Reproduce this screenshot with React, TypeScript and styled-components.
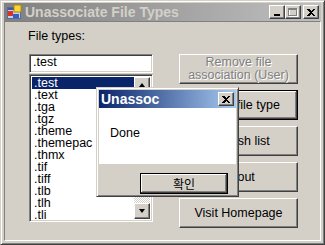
import React from "react";
import styled, { createGlobalStyle, css } from "styled-components";

const Global = createGlobalStyle`
  html, body { margin: 0; padding: 0; background: #d4d0c8; }
  body {
    font-family: "Liberation Sans", Arial, "Noto Sans CJK KR", sans-serif;
    font-size: 12.5px;
    color: #000;
  }
  * { box-sizing: border-box; }
`;

const raised = css`
  border: 1px solid;
  border-color: #ffffff #404040 #404040 #ffffff;
  box-shadow: inset -1px -1px #808080, inset 1px 1px #d4d0c8;
  background: #d4d0c8;
`;

const sunken = css`
  border: 1px solid;
  border-color: #808080 #ffffff #ffffff #808080;
  box-shadow: inset 1px 1px #404040, inset -1px -1px #d4d0c8;
`;

const Window = styled.div`
  position: relative;
  width: 325px;
  height: 245px;
  background: #d4d0c8;
  border: 1px solid;
  border-color: #d4d0c8 #404040 #404040 #d4d0c8;
  box-shadow: inset 1px 1px #ffffff, inset -1px -1px #808080;
  padding: 2px 3px 3px 3px;
  display: flex;
  flex-direction: column;
  overflow: hidden;
`;

const TitleBar = styled.div<{ $active?: boolean }>`
  height: 18px;
  flex: none;
  display: flex;
  align-items: center;
  padding: 0 2px;
  background: ${(p) =>
    p.$active
      ? "linear-gradient(to right, #0a246a, #a6caf0)"
      : "linear-gradient(to right, #808080, #c0c0c0)"};
  color: ${(p) => (p.$active ? "#ffffff" : "#d4d0c8")};
  font-family: "Liberation Sans", Arial, sans-serif;
  font-weight: bold;
  font-size: 14px;
`;

const TitleText = styled.span<{ $indent: number }>`
  flex: 1;
  margin-left: ${(p) => p.$indent}px;
  white-space: nowrap;
  overflow: hidden;
  line-height: 18px;
`;

const CaptionButton = styled.div<{ $gap?: number }>`
  ${raised};
  width: 16px;
  height: 14px;
  flex: none;
  display: flex;
  align-items: center;
  justify-content: center;
  margin-left: ${(p) => p.$gap ?? 0}px;
`;

const Client = styled.div`
  flex: 1;
  display: flex;
  align-items: flex-start;
  border: 1px solid;
  border-color: #808080 #ffffff #ffffff #808080;
  padding: 7px 0 0 24px;
  gap: 26px;
`;

const LeftColumn = styled.div`
  width: 124px;
  display: flex;
  flex-direction: column;
`;

const Label = styled.div`
  line-height: 14px;
  height: 14px;
  margin-left: -1px;
  white-space: nowrap;
`;

const TextField = styled.div`
  ${sunken};
  background: #ffffff;
  height: 19px;
  margin-top: 11px;
  padding-left: 3px;
  line-height: 15px;
`;

const ListBox = styled.div`
  ${sunken};
  background: #ffffff;
  height: 148px;
  margin-top: 1px;
  padding: 2px;
  display: flex;
`;

const Items = styled.div`
  flex: 1;
  overflow: hidden;
`;

const Item = styled.div<{ $selected?: boolean }>`
  height: 12px;
  line-height: 12px;
  padding-left: 2px;
  white-space: nowrap;
  background: ${(p) => (p.$selected ? "#0a246a" : "transparent")};
  color: ${(p) => (p.$selected ? "#ffffff" : "#000000")};
`;

const ScrollBar = styled.div`
  width: 16px;
  display: flex;
  flex-direction: column;
`;

const ScrollTrack = styled.div`
  flex: 1;
  background-color: #ffffff;
  background-image: repeating-conic-gradient(#d4d0c8 0 25%, #ffffff 0 50%);
  background-size: 2px 2px;
`;

const ArrowButton = styled.div`
  ${raised};
  width: 16px;
  height: 16px;
  display: flex;
  align-items: center;
  justify-content: center;
`;

const Arrow = styled.div<{ $down?: boolean }>`
  width: 0;
  height: 0;
  border-left: 3.5px solid transparent;
  border-right: 3.5px solid transparent;
  ${(p) =>
    p.$down
      ? "border-top: 4px solid #000;"
      : "border-bottom: 4px solid #000;"}
`;

const RightColumn = styled.div`
  width: 119px;
  margin-top: 25px;
  display: flex;
  flex-direction: column;
  gap: 6px;
`;

const Button = styled.div<{ $disabled?: boolean; $default?: boolean; $h?: number }>`
  height: ${(p) => p.$h ?? 30}px;
  display: flex;
  align-items: center;
  justify-content: center;
  text-align: center;
  line-height: 13px;
  white-space: nowrap;
  background: #d4d0c8;
  ${(p) =>
    p.$default
      ? css`
          border: 1px solid #000;
          box-shadow: inset -1px -1px #404040, inset 1px 1px #ffffff,
            inset -2px -2px #808080, inset 2px 2px #d4d0c8;
        `
      : raised}
  color: ${(p) => (p.$disabled ? "#808080" : "#000")};
  text-shadow: ${(p) => (p.$disabled ? "1px 1px 0 #ffffff" : "none")};
`;

const Dialog = styled.div`
  position: absolute;
  left: 95px;
  top: 86px;
  width: 143px;
  height: 110px;
  background: #d4d0c8;
  border: 1px solid;
  border-color: #d4d0c8 #404040 #404040 #d4d0c8;
  box-shadow: inset 1px 1px #ffffff, inset -1px -1px #808080;
  padding: 2px;
  display: flex;
  flex-direction: column;
`;

const DialogBody = styled.div`
  background: #ffffff;
  height: 56px;
  padding: 18px 0 0 11px;
  line-height: 14px;
`;

const DialogFooter = styled.div`
  flex: 1;
  display: flex;
  justify-content: flex-end;
  align-items: flex-start;
  padding: 9px 8px 0 0;
`;

const OkButton = styled(Button)`
  width: 88px;
  font-family: "Noto Sans CJK KR", "Liberation Sans", sans-serif;
  font-size: 12px;
`;

const AppIcon = () => (
  <svg width="16" height="16" viewBox="0 0 16 16">
    <rect x="1.5" y="3.5" width="13" height="11" fill="#c8d0e8" stroke="#5a6a9a" />
    <rect x="2" y="4" width="12" height="2" fill="#3a5ab0" />
    <rect x="8" y="1" width="7" height="7" fill="#f8d838" stroke="#b08800" strokeWidth="1" />
    <rect x="2" y="7" width="5" height="5" fill="#e03020" />
    <rect x="7" y="10" width="6" height="4" fill="#3060d0" />
  </svg>
);

const MinIcon = () => (
  <svg width="8" height="8" viewBox="0 0 8 8" shapeRendering="crispEdges">
    <rect x="1" y="6" width="6" height="2" fill="#000" />
  </svg>
);

const MaxIcon = () => (
  <svg width="10" height="10" viewBox="0 0 10 10" shapeRendering="crispEdges">
    <path d="M1.5 2.5h8v7h-8z" fill="none" stroke="#ffffff" />
    <path d="M0.5 1.5h8v7h-8z" fill="none" stroke="#808080" />
    <rect x="0" y="1" width="9" height="2" fill="#808080" />
  </svg>
);

const CloseIcon = () => (
  <svg width="8" height="7" viewBox="0 0 8 7" shapeRendering="crispEdges">
    <path d="M0 0h2l2 2 2-2h2L5 3.5 8 7H6L4 5 2 7H0l3-3.5z" fill="#000" />
  </svg>
);

const files = [
  ".test", ".text", ".tga", ".tgz", ".theme", ".themepac",
  ".thmx", ".tif", ".tiff", ".tlb", ".tlh", ".tli",
];

export default function App() {
  return (
    <>
      <Global />
      <Window>
        <TitleBar>
          <AppIcon />
          <TitleText $indent={3}>Unassociate File Types</TitleText>
          <CaptionButton><MinIcon /></CaptionButton>
          <CaptionButton><MaxIcon /></CaptionButton>
          <CaptionButton $gap={2}><CloseIcon /></CaptionButton>
        </TitleBar>
        <Client>
          <LeftColumn>
            <Label>File types:</Label>
            <TextField>.test</TextField>
            <ListBox>
              <Items>
                {files.map((f, i) => (
                  <Item key={f} $selected={i === 0}>{f}</Item>
                ))}
              </Items>
              <ScrollBar>
                <ArrowButton><Arrow /></ArrowButton>
                <ScrollTrack />
                <ArrowButton><Arrow $down /></ArrowButton>
              </ScrollBar>
            </ListBox>
          </LeftColumn>
          <RightColumn>
            <Button $disabled>Remove file<br />association (User)</Button>
            <Button $default>Delete file type</Button>
            <Button>Refresh list</Button>
            <Button>About</Button>
            <Button>Visit Homepage</Button>
          </RightColumn>
        </Client>
        <Dialog>
          <TitleBar $active>
            <TitleText $indent={0}>Unassoc</TitleText>
            <CaptionButton><CloseIcon /></CaptionButton>
          </TitleBar>
          <DialogBody>Done</DialogBody>
          <DialogFooter>
            <OkButton $default $h={21}>확인</OkButton>
          </DialogFooter>
        </Dialog>
      </Window>
    </>
  );
}
